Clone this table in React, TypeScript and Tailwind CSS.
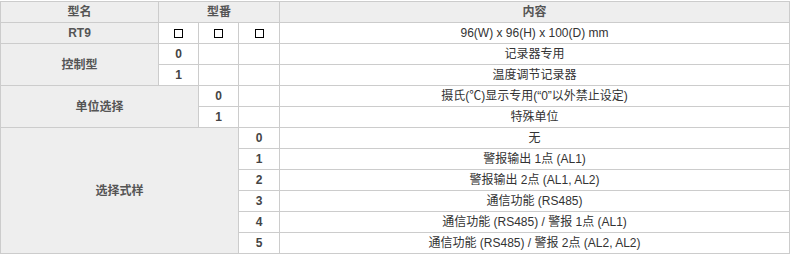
import React from 'react';

const cell = 'border border-[#cccccc] p-0 h-[21px] text-center align-middle';
const head = `${cell} bg-[#eeeeee] font-bold text-[#555555]`;
const num = `${cell} font-bold text-[#444444]`;
const txt = `${cell} text-[#333333]`;

const options = [
  '无',
  '警报输出 1点 (AL1)',
  '警报输出 2点 (AL1, AL2)',
  '通信功能 (RS485)',
  '通信功能 (RS485) / 警报 1点 (AL1)',
  '通信功能 (RS485) / 警报 2点 (AL2, AL2)',
];

const Box: React.FC = () => (
  <span className="inline-block w-[9px] h-[9px] border border-black align-middle" />
);

export default function App() {
  return (
    <div className="bg-white w-[791px] h-[255px] pt-px font-['Liberation_Sans','Noto_Sans_CJK_SC',sans-serif] text-[12px] leading-[14px]">
      <table className="table-fixed border-collapse w-[790px]">
        <colgroup>
          <col className="w-[158px]" />
          <col className="w-[40px]" />
          <col className="w-[40px]" />
          <col className="w-[41px]" />
          <col />
        </colgroup>
        <tbody>
          <tr>
            <td className={head}>型名</td>
            <td className={head} colSpan={3}>型番</td>
            <td className={head}>内容</td>
          </tr>
          <tr>
            <td className={head}>RT9</td>
            <td className={cell}><Box /></td>
            <td className={cell}><Box /></td>
            <td className={cell}><Box /></td>
            <td className={txt}>96(W) x 96(H) x 100(D) mm</td>
          </tr>
          <tr>
            <td className={head} rowSpan={2}>控制型</td>
            <td className={num}>0</td>
            <td className={cell} />
            <td className={cell} />
            <td className={txt}>记录器专用</td>
          </tr>
          <tr>
            <td className={num}>1</td>
            <td className={cell} />
            <td className={cell} />
            <td className={txt}>温度调节记录器</td>
          </tr>
          <tr>
            <td className={head} rowSpan={2} colSpan={2}>单位选择</td>
            <td className={num}>0</td>
            <td className={cell} />
            <td className={txt}>摄氏(℃)显示专用(“0”以外禁止设定)</td>
          </tr>
          <tr>
            <td className={num}>1</td>
            <td className={cell} />
            <td className={txt}>特殊单位</td>
          </tr>
          {options.map((o, i) => (
            <tr key={i}>
              {i === 0 && (
                <td className={head} rowSpan={6} colSpan={3}>选择式样</td>
              )}
              <td className={num}>{i}</td>
              <td className={txt}>{o}</td>
            </tr>
          ))}
        </tbody>
      </table>
    </div>
  );
}
